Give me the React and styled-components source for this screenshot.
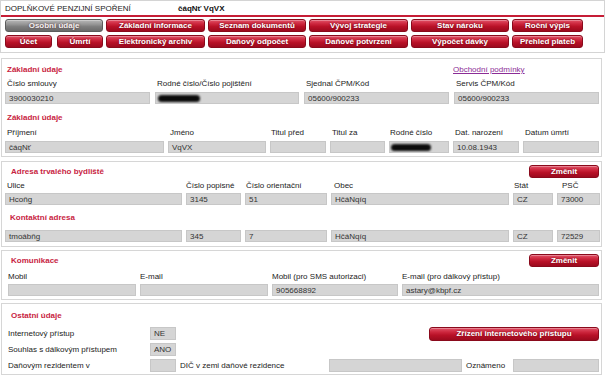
import React from "react";
import styled, { createGlobalStyle, css } from "styled-components";

const GlobalStyle = createGlobalStyle`
  html, body {
    margin: 0;
    padding: 0;
    background: #fff;
  }
  body {
    font-family: "Liberation Sans", Arial, sans-serif;
    font-size: 8px;
    color: #222;
  }
`;

const Page = styled.div`
  width: 605px;
  height: 376px;
  overflow: hidden;
`;

const Header = styled.header`
  box-sizing: border-box;
  width: 605px;
  height: 53px;
  border: 1px solid #d4d4d4;
`;

const TopBar = styled.div`
  display: flex;
  align-items: center;
  height: 14px;
  padding-left: 4px;
  border-bottom: 2px solid #c61d36;
`;

const AppTitle = styled.span`
  width: 173px;
  color: #222;
`;

const ClientName = styled.span`
  font-weight: bold;
  color: #111;
`;

const Nav = styled.nav`
  display: grid;
  grid-template-columns: 98px 99px 98px 99px 98px 71px;
  grid-auto-rows: 13px;
  gap: 3px;
  padding: 2px 0 0 4px;
`;

const Pair = styled.div`
  display: flex;
  gap: 5px;
`;

const redFace = css`
  border: 1px solid #8a0a1c;
  background: linear-gradient(
    to bottom,
    #e25368 0%,
    #cc263d 35%,
    #b81127 60%,
    #9c0a1e 100%
  );
  color: #fff;
`;

const grayFace = css`
  border: 1px solid #5c5c5c;
  background: linear-gradient(
    to bottom,
    #b8b8b8 0%,
    #959595 40%,
    #7e7e7e 60%,
    #6a6a6a 100%
  );
  color: #f2f2f2;
`;

const Button = styled.button`
  box-sizing: border-box;
  flex: none;
  width: ${(p) => (p.$w ? `${p.$w}px` : "100%")};
  height: ${(p) => p.$h || 13}px;
  margin: 0;
  padding: 0;
  border-radius: 3px;
  font: bold 8px/1 "Liberation Sans", Arial, sans-serif;
  text-shadow: 0 0 2px rgba(70, 0, 10, 0.7);
  box-shadow: inset 0 1px 0 rgba(255, 255, 255, 0.3);
  white-space: nowrap;
  ${(p) => (p.$active ? grayFace : redFace)}
`;

const Panel = styled.section`
  margin: ${(p) => p.$mt}px 3px 0 1px;
  padding: ${(p) => p.$pad};
  border: 1px solid #d6d6d6;
`;

const TitleRow = styled.div`
  display: flex;
  align-items: center;
  justify-content: space-between;
  height: ${(p) => p.$h || 12}px;
  margin-top: ${(p) => p.$mt || 0}px;
`;

const SectionTitle = styled.h2`
  margin: 0;
  padding-left: ${(p) => p.$indent ?? 2}px;
  font: bold 8px/12px "Liberation Sans", Arial, sans-serif;
  color: #c8243f;
  white-space: nowrap;
`;

const TermsLink = styled.a`
  padding-left: 1px;
  color: #8b2c96;
  text-decoration: underline;
  line-height: 12px;
`;

const Grid = styled.div`
  display: grid;
  grid-template-columns: ${(p) => p.$cols};
  column-gap: ${(p) => p.$gap ?? 4}px;
  margin-top: ${(p) => p.$mt || 0}px;
  padding-left: ${(p) => p.$inset || 0}px;
`;

const Label = styled.div`
  height: 10px;
  line-height: 10px;
  padding-left: ${(p) => p.$indent ?? 2}px;
  white-space: nowrap;
  color: #222;
`;

const Field = styled.div`
  box-sizing: border-box;
  display: flex;
  align-items: center;
  flex: none;
  width: ${(p) => (p.$w ? `${p.$w}px` : "auto")};
  height: ${(p) => p.$h || 12}px;
  padding-left: ${(p) => p.$pl ?? 3}px;
  background: #d5d5d5;
  border: 1px solid #c7c7c7;
  color: #333;
  white-space: nowrap;
  overflow: hidden;
`;

const Redacted = styled.span`
  display: inline-block;
  width: ${(p) => p.$w}px;
  height: 7px;
  border-radius: 4px;
  background: #0c0c0c;
  filter: blur(1px);
`;

const Row = styled.div`
  display: flex;
  align-items: center;
  height: 13px;
  margin-top: ${(p) => p.$mt || 0}px;
  padding-left: 6px;
`;

const RowLabel = styled.span`
  flex: none;
  width: ${(p) => p.$w}px;
  margin-left: ${(p) => p.$ml || 0}px;
  white-space: nowrap;
`;

const Spacer = styled.div`
  flex: 1;
`;

const navTop = [
  "Základní informace",
  "Seznam dokumentů",
  "Vývoj strategie",
  "Stav nároku",
  "Roční výpis",
];
const navBottom = [
  "Elektronický archiv",
  "Daňový odpočet",
  "Daňové potvrzení",
  "Výpočet dávky",
  "Přehled plateb",
];

const personCols = "159px 98px 56px 55px 60px 66px 76px";
const addressCols = "177px 55px 82px 178px 40px 43px";
const contactCols = "128px 128px 126px 197px";
const contractCols = "145px 144px 145px 145px";

export default function App() {
  return (
    <Page>
      <GlobalStyle />
      <Header>
        <TopBar>
          <AppTitle>DOPLŇKOVÉ PENZIJNÍ SPOŘENÍ</AppTitle>
          <ClientName>čáqNť VqVX</ClientName>
        </TopBar>
        <Nav>
          <Button $active>Osobní údaje</Button>
          {navTop.map((t) => (
            <Button key={t}>{t}</Button>
          ))}
          <Pair>
            <Button $w={47}>Účet</Button>
            <Button $w={46}>Úmrtí</Button>
          </Pair>
          {navBottom.map((t) => (
            <Button key={t}>{t}</Button>
          ))}
        </Nav>
      </Header>

      <Panel $mt={5} $pad="5px 2px 3px 3px">
        <Grid $cols="447px 1fr" $gap={0}>
          <SectionTitle>Základní údaje</SectionTitle>
          <TermsLink href="#">Obchodní podmínky</TermsLink>
        </Grid>
        <Grid $cols={contractCols} $gap={5} $mt={3}>
          <Label>Číslo smlouvy</Label>
          <Label>Rodné číslo/Číslo pojištění</Label>
          <Label>Sjednal ČPM/Kód</Label>
          <Label>Servis ČPM/Kód</Label>
        </Grid>
        <Grid $cols={contractCols} $gap={5} $mt={3}>
          <Field>3900030210</Field>
          <Field $pl={2}>
            <Redacted $w={42} />
          </Field>
          <Field>05600/900233</Field>
          <Field>05600/900233</Field>
        </Grid>
        <TitleRow $mt={8}>
          <SectionTitle>Základní údaje</SectionTitle>
        </TitleRow>
        <Grid $cols={personCols} $mt={4}>
          <Label>Příjmení</Label>
          <Label>Jméno</Label>
          <Label $indent={1}>Titul před</Label>
          <Label>Titul za</Label>
          <Label $indent={1}>Rodné číslo</Label>
          <Label>Dat. narození</Label>
          <Label>Datum úmrtí</Label>
        </Grid>
        <Grid $cols={personCols} $mt={3}>
          <Field>čáqNť</Field>
          <Field>VqVX</Field>
          <Field />
          <Field />
          <Field $pl={1}>
            <Redacted $w={40} />
          </Field>
          <Field>10.08.1943</Field>
          <Field />
        </Grid>
      </Panel>

      <Panel $mt={4} $pad="3px 2px 4px 3px">
        <TitleRow $h={13}>
          <SectionTitle $indent={6}>Adresa trvalého bydliště</SectionTitle>
          <Button $w={70}>Změnit</Button>
        </TitleRow>
        <Grid $cols={addressCols} $mt={3}>
          <Label>Ulice</Label>
          <Label $indent={0}>Číslo popisné</Label>
          <Label $indent={1}>Číslo orientační</Label>
          <Label $indent={3}>Obec</Label>
          <Label $indent={1}>Stát</Label>
          <Label $indent={5}>PSČ</Label>
        </Grid>
        <Grid $cols={addressCols} $mt={2}>
          <Field>Hcoňg</Field>
          <Field>3145</Field>
          <Field>51</Field>
          <Field>HčáNqíq</Field>
          <Field>CZ</Field>
          <Field>73000</Field>
        </Grid>
        <TitleRow $mt={7}>
          <SectionTitle $indent={5}>Kontaktní adresa</SectionTitle>
        </TitleRow>
        <Grid $cols={addressCols} $mt={6}>
          <Field>tmoábňg</Field>
          <Field>345</Field>
          <Field>7</Field>
          <Field>HčáNqíq</Field>
          <Field>CZ</Field>
          <Field>72529</Field>
        </Grid>
      </Panel>

      <Panel $mt={3} $pad="3px 2px 3px 3px">
        <TitleRow $h={13}>
          <SectionTitle $indent={6}>Komunikace</SectionTitle>
          <Button $w={70}>Změnit</Button>
        </TitleRow>
        <Grid $cols={contactCols} $mt={5} $inset={3}>
          <Label $indent={0}>Mobil</Label>
          <Label $indent={0}>E-mail</Label>
          <Label $indent={0}>Mobil (pro SMS autorizaci)</Label>
          <Label $indent={0}>E-mail (pro dálkový přístup)</Label>
        </Grid>
        <Grid $cols={contactCols} $mt={2} $inset={3}>
          <Field />
          <Field />
          <Field>905668892</Field>
          <Field>astary@kbpf.cz</Field>
        </Grid>
      </Panel>

      <Panel $mt={3} $pad="6px 2px 2px 0">
        <TitleRow>
          <SectionTitle $indent={9}>Ostatní údaje</SectionTitle>
        </TitleRow>
        <Row $mt={5}>
          <RowLabel $w={142}>Internetový přístup</RowLabel>
          <Field $w={26} $h={13}>NE</Field>
          <Spacer />
          <Button $w={170} $h={14}>
            Zřízení internetového přístupu
          </Button>
        </Row>
        <Row $mt={3}>
          <RowLabel $w={142}>Souhlas s dálkovým přístupem</RowLabel>
          <Field $w={26} $h={13}>ANO</Field>
        </Row>
        <Row $mt={3}>
          <RowLabel $w={142}>Daňovým rezidentem v</RowLabel>
          <Field $w={26} $h={13} />
          <RowLabel $w={149} $ml={4}>
            DIČ v zemi daňové rezidence
          </RowLabel>
          <Field $w={133} $h={13} />
          <RowLabel $w={47} $ml={4}>
            Oznámeno
          </RowLabel>
          <Field $w={86} $h={13} />
        </Row>
      </Panel>
    </Page>
  );
}
